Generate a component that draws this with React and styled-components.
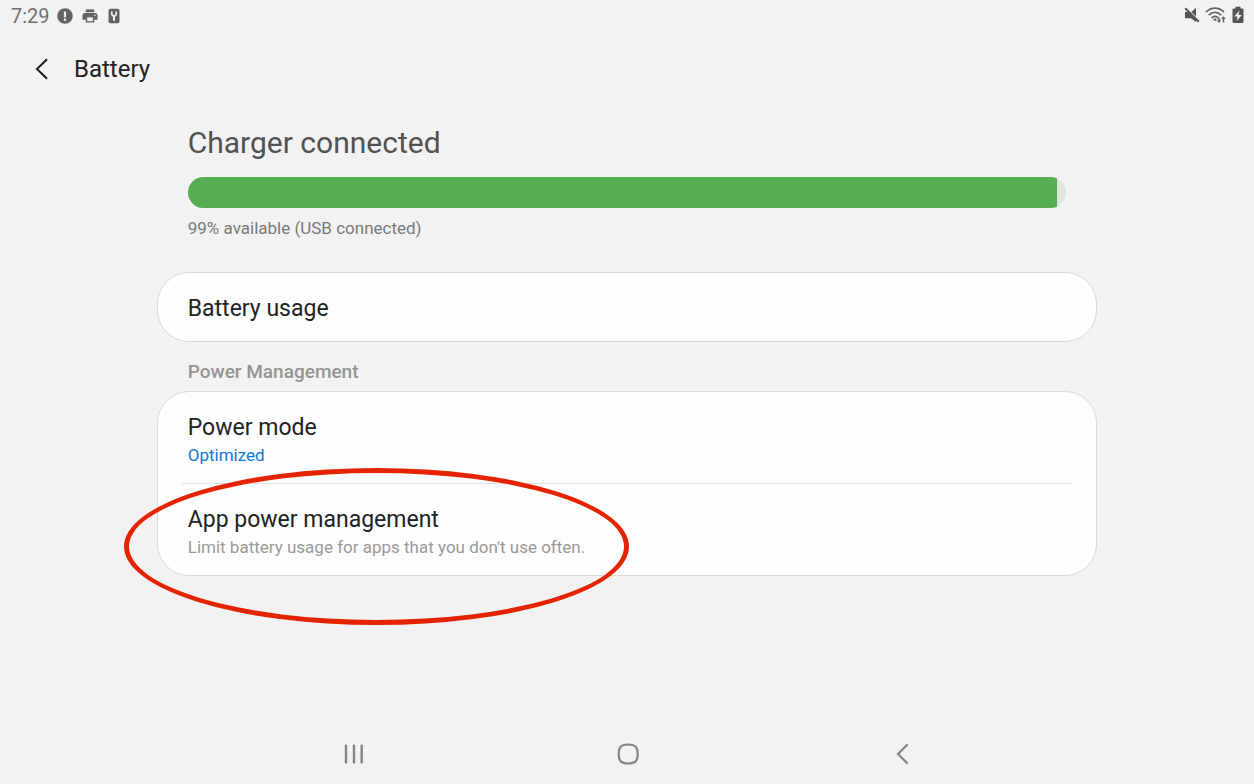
import React from 'react';
import styled, { createGlobalStyle } from 'styled-components';

const App = () => {
  const level = 99;
  return (
    <Page>
      <GlobalStyle />
      <StatusBar>
        <StatusGroup>
          <Clock>7:29</Clock>
          <AlertIcon />
          <PrinterIcon />
          <KeyIcon />
        </StatusGroup>
        <SystemGroup>
          <MuteIcon />
          <WifiIcon />
          <ChargingIcon />
        </SystemGroup>
      </StatusBar>
      <Header>
        <BackButton aria-label="Navigate up">
          <svg width="14" height="22" viewBox="0 0 14 22" fill="none" stroke="#1c1c1c" strokeWidth="2">
            <path d="M13 1.200L3 11l10 9.800" />
          </svg>
        </BackButton>
        <PageTitle>Battery</PageTitle>
      </Header>
      <Content>
        <Summary>
          <SummaryTitle>Charger connected</SummaryTitle>
          <Track role="progressbar" aria-label="Battery level" aria-valuenow={level} aria-valuemin={0} aria-valuemax={100}>
            <Fill style={{ width: `${level}%` }} />
          </Track>
          <SummaryText>{level}% available (USB connected)</SummaryText>
        </Summary>
        <Card>
          <Row>
            <RowTitle>Battery usage</RowTitle>
          </Row>
        </Card>
        <SectionTitle>Power Management</SectionTitle>
        <Card>
          <Row>
            <RowTitle>Power mode</RowTitle>
            <RowText $active>Optimized</RowText>
          </Row>
          <Divider />
          <Row>
            <RowTitle>App power management</RowTitle>
            <RowText>Limit battery usage for apps that you don't use often.</RowText>
            <Highlight />
          </Row>
        </Card>
      </Content>
      <NavBar>
        <NavButton aria-label="Recent apps">
          <svg width="22" height="22" viewBox="0 0 22 22" fill="none" stroke="#858585" strokeWidth="2.400" strokeLinecap="round">
            <path d="M4 2.600v16.800M12 2.600v16.800M19.700 2.600v16.800" />
          </svg>
        </NavButton>
        <NavButton aria-label="Home">
          <svg width="24" height="22" viewBox="0 0 24 22" fill="none" stroke="#858585" strokeWidth="2.200">
            <path d="M13.200 1.500C20.200 1.500 22.700 4 22.700 11S20.200 20.500 13.200 20.500 3.700 18 3.700 11 6.200 1.500 13.200 1.500z" />
          </svg>
        </NavButton>
        <NavButton aria-label="Back">
          <svg width="22" height="22" viewBox="0 0 22 22" fill="none" stroke="#858585" strokeWidth="2.200" strokeLinecap="round">
            <path d="M17 2L8 11l9 9" />
          </svg>
        </NavButton>
      </NavBar>
    </Page>
  );
};

export default App;

const AlertIcon = () => (
  <svg width="18" height="16" viewBox="0 0 18 16">
    <circle cx="8" cy="8" r="7.800" fill="#636363" />
    <path d="M6.900 3.400h2.200v5.800H6.900zM6.900 10.500h2.200v2.200H6.900z" fill="#f1f1f1" />
  </svg>
);

const PrinterIcon = () => (
  <svg width="16" height="16" viewBox="0 0 17 16" fill="#636363">
    <path d="M4 1h9v3H4z" />
    <path d="M3 4.900h11a2.500 2.500 0 0 1 2.500 2.500V12H13v3H4v-3H.5V7.400A2.500 2.500 0 0 1 3 4.900z" />
    <path d="M5.500 9.500h6v4h-6z" fill="#f1f1f1" />
    <circle cx="13.800" cy="7.500" r=".8" fill="#f1f1f1" />
  </svg>
);

const KeyIcon = () => (
  <svg width="16" height="16" viewBox="-3 0 16 16">
    <rect x=".5" y=".8" width="11" height="14.400" rx="2" fill="#636363" />
    <path d="M3.800 3.400v2.400a2.200 2.200 0 0 0 4.400 0V3.400" fill="none" stroke="#f1f1f1" strokeWidth="1.600" />
    <path d="M6 7.500v5.300" stroke="#f1f1f1" strokeWidth="2" />
  </svg>
);

const MuteIcon = () => (
  <svg width="16" height="16" viewBox="0 0 16 16" fill="#555">
    <path d="M1 5h3.700L12 12.300V15L7 11.300H1z" />
    <path d="M12 .8v8.700L7.400 4.900z" />
    <path d="M1.200 1.200l13.600 13.600" stroke="#555" strokeWidth="2" />
  </svg>
);

const WifiIcon = () => (
  <svg width="22" height="18" viewBox="0 0 22 18" fill="none" stroke="#636363" strokeWidth="1.700">
    <path d="M1 6.200c5.200-5.300 12.800-5.300 18 0M3.800 9.200c3.800-3.700 8.600-3.700 12.400 0M6.600 12c2.200-2 4.600-2 6.800 0" />
    <path d="M8.200 13.500L10 12l1.800 1.500L10 15.300z" fill="#636363" stroke="none" />
    <path d="M14 11.500V16M18.500 16.500V12" strokeWidth="1.500" />
    <path d="M11.700 14.200h4.600L14 17zM16.200 13h4.600l-2.300-2.800z" fill="#636363" stroke="none" />
  </svg>
);

const ChargingIcon = () => (
  <svg width="12" height="18" viewBox="0 0 12 18">
    <path d="M3.500 .8h5v1.800h1.800q1.200 0 1.200 1.200v12q0 1.200-1.200 1.200H1.700q-1.200 0-1.200-1.200v-12q0-1.200 1.200-1.200h1.800z" fill="#555" />
    <path d="M7.400 4.500L2.200 10.600h3.200L4.600 15l5.200-6.100H6.500z" fill="#f1f1f1" />
  </svg>
);

const GlobalStyle = createGlobalStyle`
* {
  box-sizing: border-box;
}
body {
  margin: 0;
  background-color: #f2f2f2;
  font-family: Roboto, 'Liberation Sans', sans-serif;
}
button {
  padding: 0;
  border: none;
  background: none;
  font-family: inherit;
  cursor: pointer;
}
svg {
  display: block;
}
`;
const Page = styled.div`
display: flex;
flex-direction: column;
min-height: 100vh;
`;
const StatusBar = styled.div`
display: flex;
justify-content: space-between;
align-items: center;
height: 32px;
padding: 0 10px 0 11px;
`;
const StatusGroup = styled.div`
display: flex;
align-items: center;
gap: 7px;
`;
const SystemGroup = styled(StatusGroup)`
gap: 5px;
padding-bottom: 2px;
`;
const Clock = styled.span`
font-size: 20px;
line-height: 24px;
color: #707070;
`;
const Header = styled.header`
display: flex;
align-items: center;
gap: 16px;
height: 74px;
padding: 0 24px;
`;
const BackButton = styled.button`
display: flex;
align-items: center;
justify-content: center;
width: 34px;
height: 48px;
`;
const PageTitle = styled.h1`
margin: 0;
font-size: 24px;
font-weight: 400;
line-height: 28px;
color: #222;
`;
const Content = styled.main`
flex: 1;
width: 75%;
margin: 0 auto;
`;
const Summary = styled.section`
padding: 19px 31px 34px;
`;
const SummaryTitle = styled.h2`
margin: 0 0 16px;
font-size: 30px;
font-weight: 400;
line-height: 36px;
color: #525252;
`;
const Track = styled.div`
height: 31px;
border-radius: 16px;
background-color: #e3e3e3;
overflow: hidden;
`;
const Fill = styled.div`
height: 100%;
background-color: #56ad52;
`;
const SummaryText = styled.p`
margin: 10px 0 0;
font-size: 17px;
line-height: 20px;
color: #7a7a7a;
`;
const Card = styled.section`
border: 1px solid #d9d9d9;
border-radius: 32px;
background-color: #fdfdfd;
`;
const Row = styled.button`
position: relative;
display: flex;
flex-direction: column;
gap: 3px;
width: 100%;
padding: 22px 30px 18px;
text-align: left;
`;
const RowTitle = styled.span`
font-size: 23px;
line-height: 28px;
color: #222;
`;
const RowText = styled.span`
font-size: 17px;
line-height: 20px;
color: ${(props) => (props.$active ? '#1277d8' : '#999')};
`;
const SectionTitle = styled.h3`
margin: 18px 31px 7px;
font-size: 19px;
font-weight: 500;
line-height: 24px;
color: #949494;
`;
const Divider = styled.hr`
height: 1px;
margin: 0 24px;
border: none;
background-color: #e0e0e0;
`;
const Highlight = styled.span`
position: absolute;
top: -16px;
left: -34px;
width: 505px;
height: 157px;
border: 5px solid #e42400;
border-radius: 50%;
pointer-events: none;
`;
const NavBar = styled.nav`
display: flex;
justify-content: center;
gap: 18%;
height: 60px;
`;
const NavButton = styled.button`
display: flex;
align-items: center;
justify-content: center;
width: 48px;
`;
